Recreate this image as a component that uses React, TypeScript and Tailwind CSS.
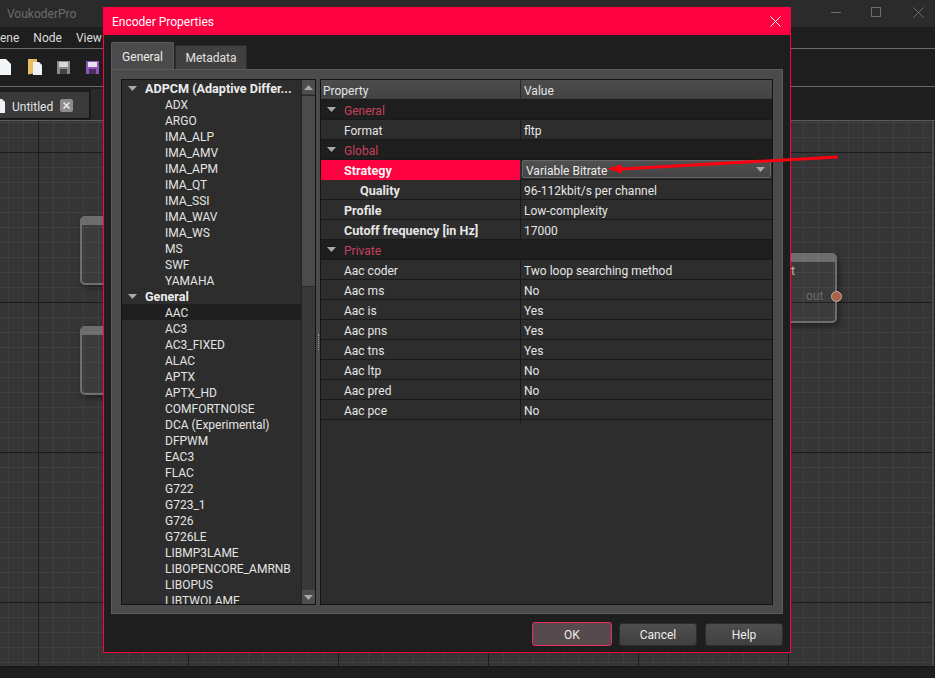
const adpcm = ['ADX', 'ARGO', 'IMA_ALP', 'IMA_AMV', 'IMA_APM', 'IMA_QT', 'IMA_SSI', 'IMA_WAV', 'IMA_WS', 'MS', 'SWF', 'YAMAHA'];
const general = ['AAC', 'AC3', 'AC3_FIXED', 'ALAC', 'APTX', 'APTX_HD', 'COMFORTNOISE', 'DCA (Experimental)', 'DFPWM', 'EAC3', 'FLAC', 'G722', 'G723_1', 'G726', 'G726LE', 'LIBMP3LAME', 'LIBOPENCORE_AMRNB', 'LIBOPUS', 'LIBTWOLAME'];
const privateRows = [
  ['Aac coder', 'Two loop searching method'],
  ['Aac ms', 'No'],
  ['Aac is', 'Yes'],
  ['Aac pns', 'Yes'],
  ['Aac tns', 'Yes'],
  ['Aac ltp', 'No'],
  ['Aac pred', 'No'],
  ['Aac pce', 'No'],
];

function Caret({ className = '' }: { className?: string }) {
  return (
    <svg width="9" height="5" viewBox="0 0 9 5" className={className}>
      <path d="M0 0h9L4.500 5z" fill="#a8a8a8" />
    </svg>
  );
}

function TreeHead({ label }: { label: string }) {
  return (
    <div className="flex h-4 items-center text-[12.6px] font-bold text-[#ececec]">
      <Caret className="ml-[6px] mr-[8px] shrink-0" />
      <span className="mt-[2px] truncate leading-4">{label}</span>
    </div>
  );
}

function TreeItem({ label, active = false }: { label: string; active?: boolean }) {
  return <div className={`h-4 pl-[43px] leading-[18px] text-[#e4e4e4] ${active ? 'bg-[#1f1f1f]' : ''}`}>{label}</div>;
}

function GroupRow({ label }: { label: string }) {
  return (
    <div className="flex h-5 items-center border-b border-[#191919] bg-[#1e1e1e] text-[#c8405f]">
      <Caret className="ml-[6px] mr-[8px]" />
      <span className="mt-[2px] leading-4">{label}</span>
    </div>
  );
}

function PropRow({ name, value, bold = false, indent = false }: { name: string; value: string; bold?: boolean; indent?: boolean }) {
  return (
    <div className="grid h-5 grid-cols-[199px_1fr] items-center border-b border-[#191919] bg-[#2d2d2d] text-[#e6e6e6]">
      <div className={`h-full ${indent ? 'pl-[39px]' : 'pl-[23px]'} ${bold ? 'text-[12.6px] font-bold leading-[21px]' : 'leading-[23px]'}`}>{name}</div>
      <div className="h-full border-l border-[#191919] pl-[3px] leading-[23px]">{value}</div>
    </div>
  );
}

function Btn({ label, primary = false }: { label: string; primary?: boolean }) {
  return (
    <button
      className={`flex items-center justify-center rounded-[3px] border pt-px text-[#ececec] ${
        primary ? 'h-6 w-[80px] border-[#e8305f] bg-[#574a4e]' : 'h-[23px] w-[78px] border-[#2c2c2c] bg-gradient-to-b from-[#4e4e4e] to-[#404040]'
      }`}
    >
      {label}
    </button>
  );
}

function Node({ className }: { className: string }) {
  return (
    <div className={`absolute overflow-hidden rounded-[5px] border-2 border-[#6e6e6e] bg-white/[0.03] shadow-[2px_3px_6px_rgba(0,0,0,0.4)] ${className}`}>
      <div className="h-[7px] bg-white/25" />
    </div>
  );
}

function ToolIcons() {
  return (
    <div className="flex h-[37px] items-center">
      <svg width="11" height="16" viewBox="0 0 11 16" className="mb-[2px]">
        <path d="M0 0h6l5 5v11H0z" fill="#f2f5f7" />
      </svg>
      <svg width="15" height="16" viewBox="0 0 15 16" className="mb-[2px] ml-[17px]">
        <path d="M0 0h9v14l-9 1.500z" fill="#e9bd63" />
        <path d="M5 3h6l3 3v10H5z" fill="#eef2f4" />
      </svg>
      <svg width="13" height="13" viewBox="0 0 13 13" className="ml-[14px]">
        <path d="M0 0h13v13H0z" fill="#8a8a8a" />
        <path d="M2 1h9v5H2z" fill="#d8d8d8" />
        <path d="M3 8h7v5H3z" fill="#444444" />
      </svg>
      <svg width="13" height="13" viewBox="0 0 13 13" className="ml-[16px]">
        <path d="M0 0h13v13H0z" fill="#8e56b8" />
        <path d="M2 1h9v5H2z" fill="#e8e0ee" />
        <path d="M3 8h7v5H3z" fill="#4a2f60" />
      </svg>
    </div>
  );
}

export default function App() {
  return (
    <div className="relative flex h-[678px] w-[935px] flex-col overflow-hidden bg-[#1e1e1e] text-xs font-['Roboto',sans-serif]">
      {/* main window behind the dialog */}
      <div className="flex h-[27px] shrink-0 items-center justify-between bg-[#2b2b2b] pl-[7px] text-[#6c6c6c]">
        <span>VoukoderPro</span>
        <div className="flex items-center pb-[3px]">
          <div className="h-px w-[10px] bg-[#6e6e6e]" />
          <div className="ml-[30px] h-[10px] w-[10px] border border-[#6e6e6e]" />
          <svg width="11" height="11" viewBox="0 0 11 11" className="ml-[32px] mr-[11px]">
            <path d="M0.500 0.500l10 10M10.500 0.500l-10 10" stroke="#6e6e6e" />
          </svg>
        </div>
      </div>
      <div className="flex h-[22px] shrink-0 items-center gap-[14px] border-b border-[#6a6a6a] text-[#dcdcdc]">
        <span>ene</span>
        <span>Node</span>
        <span>View</span>
      </div>
      <div className="h-[38px] shrink-0 border-b border-[#6a6a6a]">
        <ToolIcons />
      </div>
      <div className="flex h-[34px] shrink-0 items-end border-b border-[#5c5c5c]">
        <div className="mb-px flex h-[27px] w-[90px] items-center border-b border-r border-[#141414] bg-[#3a3a3a] text-[#e4e4e4]">
          <svg width="5" height="14" viewBox="0 0 5 14" className="mt-px">
            <path d="M0 0h2l3 3v11H0z" fill="#eef2f4" />
          </svg>
          <span className="ml-[7px] mt-[3px] leading-4">Untitled</span>
          <span className="ml-[7px] mt-px flex h-[13px] w-[13px] items-center justify-center rounded-[2px] bg-[#8c8c8c]">
            <svg width="7" height="7" viewBox="0 0 7 7">
              <path d="M0.500 0.500l6 6M6.500 0.500l-6 6" stroke="#ececec" strokeWidth="1.500" />
            </svg>
          </span>
        </div>
        <div className="ml-px h-[31px] w-[14px] rounded-tl-[2px] bg-[#2a2a2a]" />
      </div>
      <div className="relative mr-px h-[545px] shrink-0 overflow-hidden border-r-2 border-[#4a4a4a] bg-[#353535] bg-[image:linear-gradient(#1c1c1c_1px,transparent_1px),linear-gradient(90deg,#1c1c1c_1px,transparent_1px),linear-gradient(#3f3f3f_1px,transparent_1px),linear-gradient(90deg,#3f3f3f_1px,transparent_1px)] bg-[size:150px_150px,150px_150px,15px_15px,15px_15px] bg-[position:38px_31px,38px_31px,8px_1px,8px_1px]">
        <Node className="left-[80px] top-[95px] h-[69px] w-[100px]" />
        <Node className="left-[80px] top-[205px] h-[69px] w-[100px]" />
        <Node className="left-[740px] top-[132px] h-[70px] w-[97px]" />
        <span className="absolute left-[791px] top-[142px] text-[#cbb89f]">t</span>
        <span className="absolute left-[806px] top-[167px] text-[#6a6a6a]">out</span>
        <div className="absolute left-[831px] top-[170px] h-[11px] w-[11px] rounded-full border border-[#bfa79e] bg-[#a9634b]" />
      </div>
      <div className="flex-1 border-t border-[#161616] bg-[#1e1e1e]" />

      {/* dialog */}
      <div className="absolute left-[103px] top-[7px] flex h-[646px] w-[688px] flex-col border border-[#ff0040] bg-[#1e1e1e]">
        <div className="flex h-[27px] shrink-0 items-center justify-between bg-[#ff0040] pl-[8px] pr-[9px] text-white">
          <span>Encoder Properties</span>
          <svg width="11" height="11" viewBox="0 0 11 11">
            <path d="M0.500 0.500l10 10M10.500 0.500l-10 10" stroke="#ffffff" />
          </svg>
        </div>
        <div className="ml-[7px] mt-[7px] flex h-[27px] shrink-0 items-end">
          <div className="flex h-[27px] w-[63px] items-center justify-center rounded-t-[2px] border border-b-0 border-[#5a5a5a] bg-[#4b4b4b] pt-px text-[#ececec]">General</div>
          <div className="ml-px flex h-[24px] w-[72px] items-center justify-center rounded-t-[2px] border border-b-0 border-[#2c2c2c] bg-[#404040] pt-px text-[#e0e0e0]">Metadata</div>
        </div>
        <div className="ml-[7px] flex h-[545px] w-[672px] shrink-0 border border-[#5a5a5a] bg-[#4b4b4b] pb-[8px] pl-[9px] pr-[9px] pt-[9px]">
          <div className="flex w-[195px] shrink-0 overflow-hidden border border-[#141414] bg-[#2d2d2d]">
            <div className="min-w-0 flex-1 overflow-hidden">
              <TreeHead label="ADPCM (Adaptive Differ..." />
              {adpcm.map((n) => (
                <TreeItem key={n} label={n} />
              ))}
              <TreeHead label="General" />
              {general.map((n) => (
                <TreeItem key={n} label={n} active={n === 'AAC'} />
              ))}
            </div>
            <div className="flex w-[14px] shrink-0 flex-col border-l border-[#242424] bg-[#393939]">
              <div className="flex h-[14px] items-center justify-center bg-[#4d4d4d]">
                <Caret className="rotate-180" />
              </div>
              <div className="mt-px h-[192px] border-y border-[#2a2a2a] bg-[#4b4b4b]" />
              <div className="flex-1" />
              <div className="flex h-[14px] items-center justify-center bg-[#4d4d4d]">
                <Caret />
              </div>
            </div>
          </div>
          <div className="flex w-[4px] shrink-0 items-center justify-center">
            <div className="h-[16px] w-px border-l border-dotted border-[#9a9a9a]" />
          </div>
          <div className="flex w-[453px] shrink-0 flex-col overflow-hidden border border-[#141414] bg-[#2d2d2d]">
            <div className="grid h-5 shrink-0 grid-cols-[199px_1fr] items-center border-b border-[#191919] bg-gradient-to-b from-[#4c4c4c] to-[#424242] text-[#e4e4e4]">
              <span className="h-full pl-[2px] leading-[23px]">Property</span>
              <span className="h-full border-l border-[#2a2a2a] pl-[3px] leading-[23px]">Value</span>
            </div>
            <GroupRow label="General" />
            <PropRow name="Format" value="fltp" />
            <GroupRow label="Global" />
            <div className="grid h-5 grid-cols-[199px_1fr] border-b border-[#191919] bg-[#2d2d2d]">
              <div className="bg-[#ff0040] pl-[23px] text-[12.6px] font-bold leading-[21px] text-[#f4f4f4]">Strategy</div>
              <div className="ml-[2px] mr-px flex h-[18px] items-center justify-between rounded-[2px] border border-[#666666] bg-gradient-to-b from-[#505050] to-[#434343] pl-[3px] pr-[5px] text-[#ececec]">
                <span className="mt-[3px]">Variable Bitrate</span>
                <Caret />
              </div>
            </div>
            <PropRow name="Quality" value="96-112kbit/s per channel" bold indent />
            <PropRow name="Profile" value="Low-complexity" bold />
            <PropRow name="Cutoff frequency [in Hz]" value="17000" bold />
            <GroupRow label="Private" />
            {privateRows.map(([k, v]) => (
              <PropRow key={k} name={k} value={v} />
            ))}
          </div>
        </div>
        <div className="ml-[428px] mt-[8px] flex items-center">
          <Btn label="OK" primary />
          <div className="ml-[7px]">
            <Btn label="Cancel" />
          </div>
          <div className="ml-[8px]">
            <Btn label="Help" />
          </div>
        </div>
      </div>

      {/* annotation arrow drawn over the screenshot */}
      <svg width="935" height="678" viewBox="0 0 935 678" className="pointer-events-none absolute left-0 top-0">
        <path d="M838 155.500L838 158.500L622 170.500L622 173.500L607 168.500L622 164.500L622 167.500z" fill="#ff0010" />
      </svg>
    </div>
  );
}
